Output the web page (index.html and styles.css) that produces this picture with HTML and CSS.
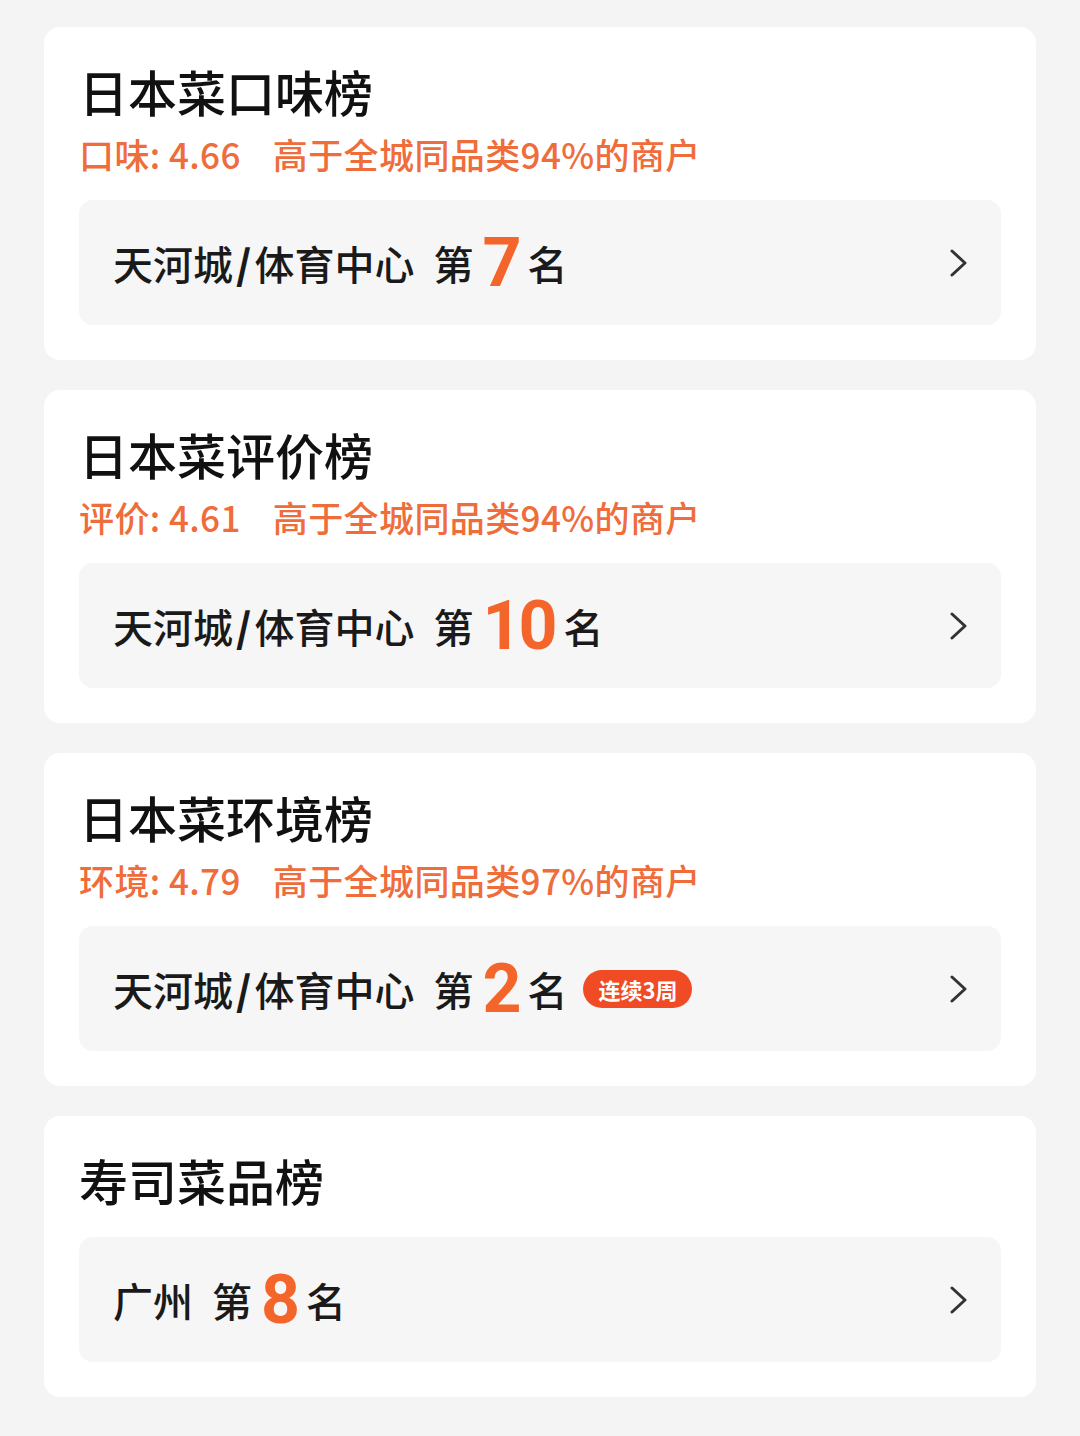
FILE: index.html
```html
<!DOCTYPE html>
<html lang="zh-CN">

<head>
    <meta charset="UTF-8">
    <meta name="viewport" content="width=device-width, initial-scale=1.0">
    <title>日本菜榜单</title>
    <link rel="stylesheet" href="styles.css">
</head>

<body>
    <div id="main">
        <section class="card">
            <h2 class="card-title">日本菜口味榜</h2>
            <p class="card-score"><span>口味: 4.66</span><span class="score-rank">高于全城同品类94%的商户</span></p>
            <a class="rank-row" href="#">
                <span class="rank-area">天河城<span class="slash">/</span>体育中心</span>
                <span class="rank-word first">第</span>
                <span class="rank-num">7</span>
                <span class="rank-word">名</span>
                <svg class="chevron" viewBox="0 0 20 28"><polyline points="4,2 17,14 4,26" /></svg>
            </a>
        </section>

        <section class="card">
            <h2 class="card-title">日本菜评价榜</h2>
            <p class="card-score"><span>评价: 4.61</span><span class="score-rank">高于全城同品类94%的商户</span></p>
            <a class="rank-row" href="#">
                <span class="rank-area">天河城<span class="slash">/</span>体育中心</span>
                <span class="rank-word first">第</span>
                <span class="rank-num">10</span>
                <span class="rank-word">名</span>
                <svg class="chevron" viewBox="0 0 20 28"><polyline points="4,2 17,14 4,26" /></svg>
            </a>
        </section>

        <section class="card">
            <h2 class="card-title">日本菜环境榜</h2>
            <p class="card-score"><span>环境: 4.79</span><span class="score-rank">高于全城同品类97%的商户</span></p>
            <a class="rank-row" href="#">
                <span class="rank-area">天河城<span class="slash">/</span>体育中心</span>
                <span class="rank-word first">第</span>
                <span class="rank-num">2</span>
                <span class="rank-word">名</span>
                <span class="streak">连续3周</span>
                <svg class="chevron" viewBox="0 0 20 28"><polyline points="4,2 17,14 4,26" /></svg>
            </a>
        </section>

        <section class="card">
            <h2 class="card-title no-score">寿司菜品榜</h2>
            <a class="rank-row" href="#">
                <span class="rank-area">广州</span>
                <span class="rank-word first">第</span>
                <span class="rank-num">8</span>
                <span class="rank-word">名</span>
                <svg class="chevron" viewBox="0 0 20 28"><polyline points="4,2 17,14 4,26" /></svg>
            </a>
        </section>
    </div>
</body>

</html>
```

FILE: styles.css
```css
body {
    margin: 0;
    background-color: #f4f4f4;
    font-family: "Noto Sans CJK SC", "Noto Sans", sans-serif;
    color: #111;
}

#main {
    display: flex;
    flex-direction: column;
    gap: 30px;
    padding: 27px 44px;
}

.card {
    background-color: #fff;
    border-radius: 16px;
    padding: 36px 35px 35px;
}

.card-title {
    margin: 0 0 15px;
    font-size: 49px;
    line-height: 56px;
    font-weight: 500;
    color: #111;
}

.card-title.no-score {
    margin-bottom: 29px;
}

.card-score {
    margin: 0 0 26px;
    font-size: 35px;
    line-height: 40px;
    font-weight: 500;
    letter-spacing: 0.4px;
    color: #ef6c3b;
}

.score-rank {
    margin-left: 32px;
}

.rank-row {
    display: flex;
    align-items: center;
    height: 125px;
    padding: 0 33px 0 34px;
    background-color: #f6f6f6;
    border-radius: 14px;
    text-decoration: none;
    color: #1a1a1a;
}

.rank-area,
.rank-word {
    font-size: 40px;
    line-height: 48px;
    font-weight: 500;
}

.slash {
    margin: 0 3px;
    font-weight: 900;
}

.rank-word.first {
    margin-left: 19px;
}

.rank-num {
    margin: 0 9px;
    font-family: Roboto, "Liberation Sans", sans-serif;
    font-size: 68px;
    line-height: 1;
    font-weight: 700;
    letter-spacing: -3px;
    color: #f4652c;
}

.streak {
    margin-left: 16px;
    padding: 0 15px;
    height: 38px;
    line-height: 38px;
    border-radius: 19px;
    background-color: #f04b24;
    color: #fff;
    font-size: 22px;
    font-weight: 700;
}

.chevron {
    margin-left: auto;
    width: 20px;
    height: 28px;
    fill: none;
    stroke: #333;
    stroke-width: 3;
    stroke-linecap: round;
    stroke-linejoin: round;
}
```
